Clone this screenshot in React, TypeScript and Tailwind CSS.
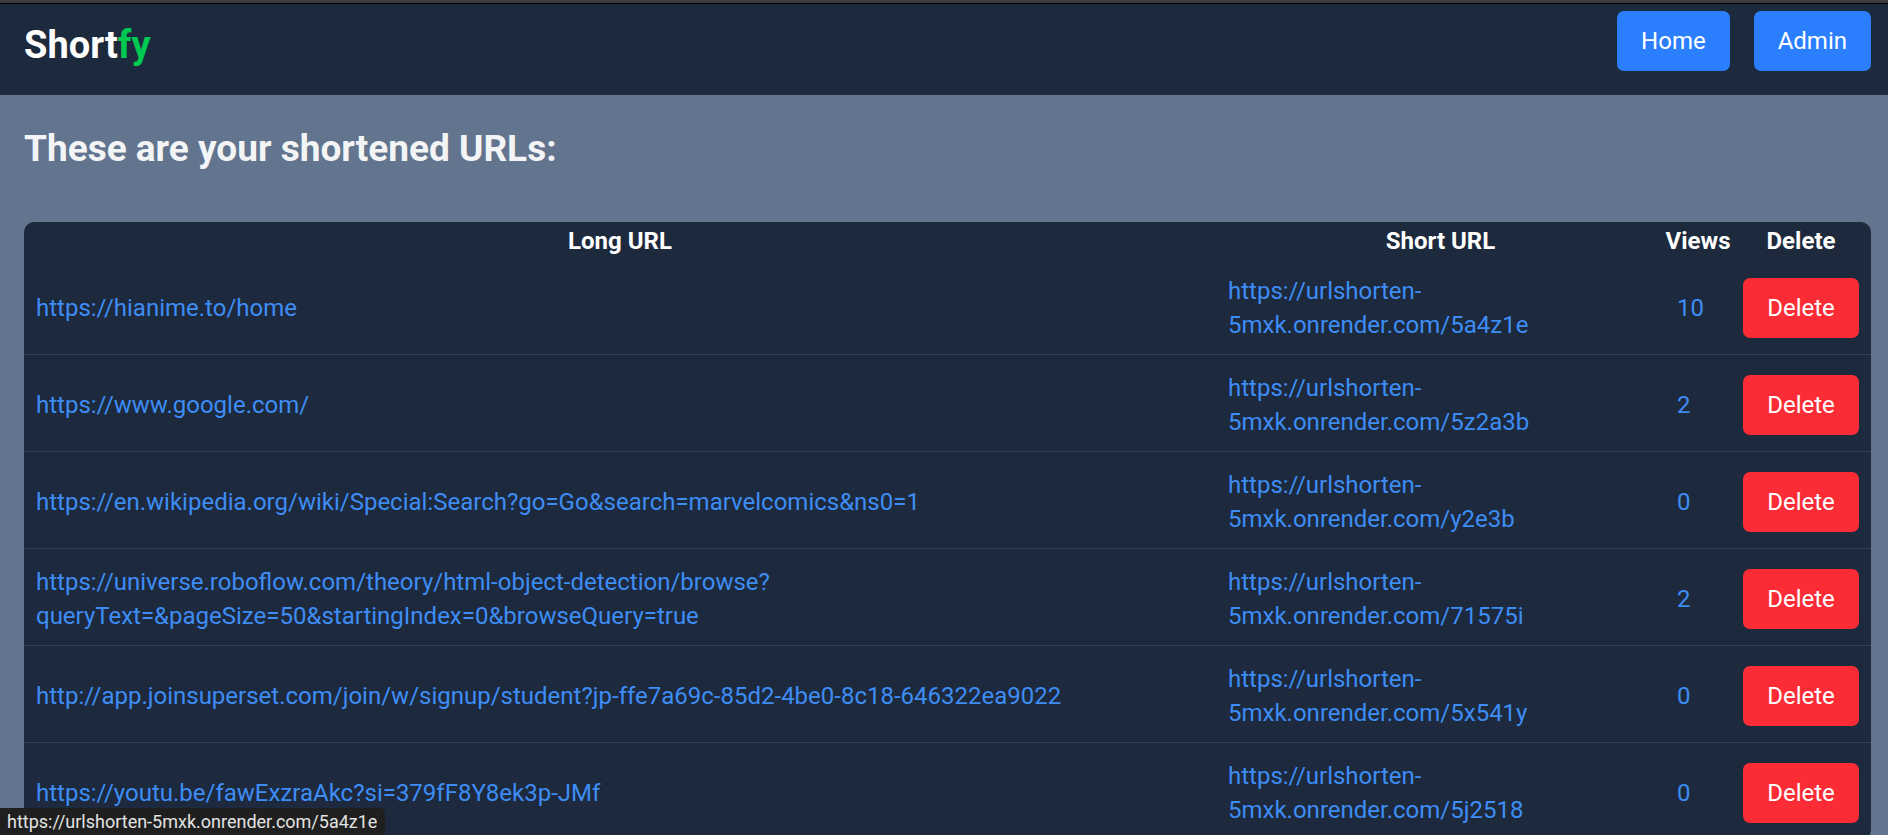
import React from "react";

type Row = { long: string; short: string; views: number };

const rows: Row[] = [
  { long: "https://hianime.to/home", short: "https://urlshorten-5mxk.onrender.com/5a4z1e", views: 10 },
  { long: "https://www.google.com/", short: "https://urlshorten-5mxk.onrender.com/5z2a3b", views: 2 },
  {
    long: "https://en.wikipedia.org/wiki/Special:Search?go=Go&search=marvelcomics&ns0=1",
    short: "https://urlshorten-5mxk.onrender.com/y2e3b",
    views: 0,
  },
  {
    long: "https://universe.roboflow.com/theory/html-object-detection/browse?queryText=&pageSize=50&startingIndex=0&browseQuery=true",
    short: "https://urlshorten-5mxk.onrender.com/71575i",
    views: 2,
  },
  {
    long: "http://app.joinsuperset.com/join/w/signup/student?jp-ffe7a69c-85d2-4be0-8c18-646322ea9022",
    short: "https://urlshorten-5mxk.onrender.com/5x541y",
    views: 0,
  },
  { long: "https://youtu.be/fawExzraAkc?si=379fF8Y8ek3p-JMf", short: "https://urlshorten-5mxk.onrender.com/5j2518", views: 0 },
];

const App = () => {
  return (
    <div className="min-h-screen bg-slate-500 font-['Roboto',sans-serif]">
      {/* browser strip */}
      <div className="h-[4px] bg-[#3c3c3c] border-b border-black" />

      {/* Navbar */}
      <nav className="bg-slate-800 pl-[24px] pr-[17px] pt-[7px] pb-[24px]">
        <div className="flex items-center justify-between h-[60px]">
          <h1 className="pt-[8px] text-[38px] leading-[45px] font-bold text-white">
            Short<span className="text-green-500">fy</span>
          </h1>
          <div className="flex gap-[24px]">
            <button className="h-[60px] px-[24px] rounded-[7px] bg-blue-500 text-white text-[24px]">Home</button>
            <button className="h-[60px] px-[24px] rounded-[7px] bg-blue-500 text-white text-[24px]">Admin</button>
          </div>
        </div>
      </nav>

      {/* Contenido */}
      <main className="pl-[24px] pr-[17px] pt-[31px]">
        <h2 className="text-[37px] leading-[45px] font-bold text-gray-100">These are your shortened URLs:</h2>

        <div className="mt-[51px] bg-slate-800 rounded-[10px] overflow-hidden">
          <table className="w-full table-fixed border-collapse text-[24px] leading-[34px]">
            <colgroup>
              <col className="w-[1192px]" />
              <col className="w-[449px]" />
              <col className="w-[66px]" />
              <col className="w-[140px]" />
            </colgroup>
            <thead>
              <tr className="text-white font-bold">
                <th className="h-[36px] px-0 pt-[2px] text-center">Long URL</th>
                <th className="h-[36px] px-0 pt-[2px] text-center">Short URL</th>
                <th className="h-[36px] px-0 pt-[2px] text-center">Views</th>
                <th className="h-[36px] px-0 pt-[2px] text-center">Delete</th>
              </tr>
            </thead>
            <tbody>
              {rows.map((r) => (
                <tr key={r.short} className="border-b border-gray-700">
                  <td className="px-[12px] pt-[16px] pb-[12px] text-[#3d8df5] break-words">
                    <a href={r.long}>{r.long}</a>
                  </td>
                  <td className="px-[12px] pt-[16px] pb-[12px] text-[#3d8df5]">
                    <a href={r.short}>{r.short}</a>
                  </td>
                  <td className="px-[12px] pt-[16px] pb-[12px] text-[#3d8df5]">{r.views}</td>
                  <td className="px-[12px] pt-[16px] pb-[12px]">
                    <button className="w-full h-[60px] rounded-[7px] bg-red-500 text-white text-[24px]">Delete</button>
                  </td>
                </tr>
              ))}
            </tbody>
          </table>
        </div>
      </main>

      {/* status bubble */}
      <div className="fixed bottom-0 left-0 h-[27px] pl-[7px] pr-[8px] bg-[#1f1f1f] rounded-tr-[6px] text-[18px] leading-[27px] text-[#e3e3e3]">
        https://urlshorten-5mxk.onrender.com/5a4z1e
      </div>
    </div>
  );
};

export default App;
